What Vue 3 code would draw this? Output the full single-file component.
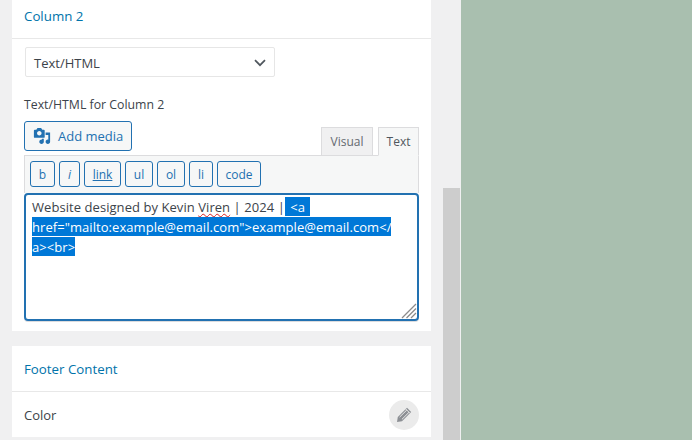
<script setup>
const buttons = [
  { label: 'b', cls: 'b' },
  { label: 'i', cls: 'i' },
  { label: 'link', cls: 'link' },
  { label: 'ul', cls: 'ul' },
  { label: 'ol', cls: 'ol' },
  { label: 'li', cls: 'li' },
  { label: 'code', cls: 'code' },
]
</script>

<template>
  <div class="page">
    <div class="sidebar">
      <section class="card first">
        <h3 class="card-title">Column 2</h3>
        <div class="card-body">
          <div class="select">
            <span class="select-text">Text/HTML</span>
            <svg class="chev" width="12" height="8" viewBox="0 0 12 8"><path d="M1 1.2 6 6.2 11 1.2" fill="none" stroke="#50575e" stroke-width="1.7"/></svg>
          </div>
          <div class="field-label">Text/HTML for Column 2</div>
          <div class="editor-tools">
            <button class="add-media">
              <svg class="media-icon" width="18" height="18" viewBox="0 0 20 20">
                <path fill="#2271b1" d="M13 11V4c0-.55-.45-1-1-1h-1.670L9 1H5L3.670 3H2c-.55 0-1 .45-1 1v7c0 .55.45 1 1 1h10c.55 0 1-.45 1-1zM7 4.500c1.380 0 2.500 1.120 2.500 2.500S8.380 9.500 7 9.500 4.500 8.380 4.500 7 5.620 4.500 7 4.500zM14 6h5v10.500c0 1.380-1.120 2.500-2.500 2.500S14 17.880 14 16.500s1.120-2.500 2.500-2.500c.17 0 .34.02.5.05V9h-3V6zm-4 8.050V13h2v3.500c0 1.380-1.120 2.500-2.500 2.500S7 17.880 7 16.500 8.120 14 9.500 14c.17 0 .34.02.5.05z"/>
              </svg>
              <span>Add media</span>
            </button>
            <div class="tabs">
              <div class="tab">Visual</div>
              <div class="tab active">Text</div>
            </div>
          </div>
          <div class="toolbar">
            <button v-for="btn in buttons" :key="btn.label" class="qt" :class="btn.cls">{{ btn.label }}</button>
          </div>
          <div class="textarea">
            <div class="line">Website designed by Kevin <span class="spell">Viren</span> | 2024 | <span class="sel open">&lt;a</span></div>
            <div class="line"><span class="sel">href="mailto:example@email.com"&gt;example@email.com&lt;/</span></div>
            <div class="line"><span class="sel">a&gt;&lt;br&gt;</span></div>
            <svg class="grip" width="16" height="16" viewBox="0 0 16 16"><path d="M15 1 1 15M15 5.500 5.500 15M15 10 10 15" fill="none" stroke="#8c8c8c" stroke-width="1.300"/></svg>
          </div>
        </div>
      </section>
      <section class="card second">
        <h3 class="card-title">Footer Content</h3>
        <div class="row">
          <span>Color</span>
          <span class="edit">
            <svg width="16" height="16" viewBox="0 0 16 16">
              <path fill="#8c8f94" d="M11 .8 15.200 5 6 14.200 1 15l.8-5Z"/>
              <path fill="none" stroke="#ebebeb" stroke-width="1" d="M3.600 10.100 10.800 3M5.900 12.400 13 5.300M9.600 1.900l4.500 4.500"/>
            </svg>
          </span>
        </div>
      </section>
    </div>
    <div class="scrollbar"><div class="thumb"></div></div>
    <div class="preview"></div>
  </div>
</template>

<style scoped>
.page {
  display: flex;
  width: 692px;
  height: 440px;
  overflow: hidden;
  background: #f0f0f1;
  font-family: "Open Sans", "Noto Sans", sans-serif;
  color: #3c434a;
}
.sidebar {
  width: 419px;
  margin-left: 12px;
  flex: none;
}
.card { background: #fff; }
.first { height: 331px; }
.second { margin-top: 15px; height: 91px; }
.card-title {
  margin: 0;
  font-size: 13.3px;
  font-weight: 500;
  color: #0073aa;
  padding: 0 12px;
  border-bottom: 1px solid #e8e8e8;
}
.first .card-title { height: 38px; line-height: 32px; }
.second .card-title { height: 45px; line-height: 46px; }
.card-body { padding: 8px 12px 0; }
.select {
  margin-left: 1px;
  width: 250px;
  height: 30px;
  box-sizing: border-box;
  border: 1px solid #e6e6e6;
  border-radius: 2px;
  display: flex;
  align-items: center;
  justify-content: space-between;
  padding: 0 8px;
  font-size: 13px;
}
.select-text { padding-top: 2px; }
.chev { margin-top: 2px; }
.field-label {
  font-size: 12.3px;
  line-height: 16px;
  margin-top: 20px;
}
.editor-tools {
  display: flex;
  justify-content: space-between;
  align-items: flex-end;
  margin-top: 8px;
  height: 34px;
}
.add-media {
  align-self: flex-start;
  width: 108px;
  height: 30px;
  box-sizing: border-box;
  display: flex;
  align-items: center;
  gap: 7px;
  padding: 0 0 0 8px;
  border: 1px solid #2271b1;
  border-radius: 3px;
  background: #f6f7f7;
  color: #2271b1;
  font: 13px "Open Sans", sans-serif;
}
.tabs { display: flex; gap: 5px; align-items: flex-end; margin-bottom: -1px; position: relative; z-index: 1; }
.tab {
  box-sizing: border-box;
  height: 29px;
  width: 52px;
  border: 1px solid #dcdcde;
  background: #f0f0f1;
  color: #646970;
  font-size: 12px;
  line-height: 27px;
  text-align: center;
}
.tab.active {
  width: 41px;
  background: #f6f7f7;
  border-bottom-color: #f6f7f7;
  color: #50575e;
}
.toolbar {
  box-sizing: border-box;
  height: 38px;
  display: flex;
  gap: 4px;
  padding: 5px 5px 0;
  background: #f6f7f7;
  border: 1px solid #dcdcde;
  border-bottom: 0;
}
.qt {
  height: 26px;
  box-sizing: border-box;
  border: 1px solid #2271b1;
  border-radius: 3px;
  background: #f6f7f7;
  color: #2271b1;
  font: 12px "Open Sans", sans-serif;
  padding: 0;
}
.qt.b { width: 25px; }
.qt.i { width: 21px; font-style: italic; }
.qt.link { width: 37px; text-decoration: underline; }
.qt.ul, .qt.ol { width: 28px; }
.qt.li { width: 24px; }
.qt.code { width: 44px; }
.textarea {
  position: relative;
  box-sizing: border-box;
  height: 128px;
  border: 2px solid #2271b1;
  border-radius: 4px;
  padding: 2px 6px;
  font-size: 13px;
  letter-spacing: 0.06px;
  color: #3c434a;
  box-shadow: 0 1px 0 #dcdcde;
}
.line { height: 20px; line-height: 21px; white-space: pre; }
.sel {
  display: inline-block;
  vertical-align: top;
  height: 19px;
  line-height: 21px;
  background: #0078d7;
  color: #fff;
}
.sel.open {
  padding: 0 5px;
  margin-left: -3px;
}
.spell {
  text-decoration: underline wavy #d9201f 1px;
  text-underline-offset: 1px;
}
.grip { position: absolute; right: 0; bottom: 0; }
.row {
  height: 45px;
  display: flex;
  align-items: center;
  justify-content: space-between;
  padding: 0 12px;
  font-size: 13px;
}
.edit {
  width: 30px;
  height: 30px;
  border-radius: 50%;
  background: #ebebeb;
  display: flex;
  align-items: center;
  justify-content: center;
}
.scrollbar {
  width: 17px;
  margin-left: 12px;
  flex: none;
  display: flex;
  flex-direction: column;
  justify-content: flex-end;
}
.thumb { height: 252px; background: #cdcdcd; }
.preview {
  flex: 1;
  margin-left: 1px;
  background: #a9bfaf;
}
</style>
